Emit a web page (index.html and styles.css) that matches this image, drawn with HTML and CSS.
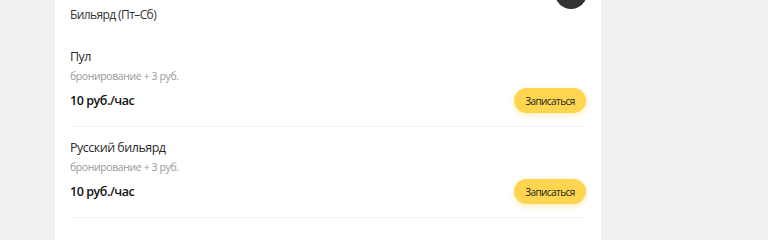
FILE: index.html
```html
<!DOCTYPE html>
<html lang="ru">
<head>
<meta charset="utf-8">
<link rel="stylesheet" href="styles.css">
</head>
<body>
<div class="page">
  <section class="card">
    <span class="avatar"></span>
    <h2 class="group-title">Бильярд (Пт–Сб)</h2>
    <div class="item">
      <div class="item-name">Пул</div>
      <div class="item-note">бронирование + 3 руб.</div>
      <div class="item-row">
        <span class="item-price">10 руб./час</span>
        <button class="btn">Записаться</button>
      </div>
    </div>
    <div class="item">
      <div class="item-name">Русский бильярд</div>
      <div class="item-note">бронирование + 3 руб.</div>
      <div class="item-row">
        <span class="item-price">10 руб./час</span>
        <button class="btn">Записаться</button>
      </div>
    </div>
  </section>
</div>
</body>
</html>
```
FILE: styles.css
```css
html, body {
  margin: 0;
  padding: 0;
  background: #f0f0f0;
  font-family: "Open Sans", "Noto Sans", sans-serif;
  color: #333;
}
.page {
  padding-left: 55px;
  height: 240px;
  overflow: hidden;
}
.card {
  position: relative;
  width: 516px;
  background: #fff;
  padding: 6px 15px 40px;
}
.avatar {
  position: absolute;
  top: -23px;
  right: 14px;
  width: 32px;
  height: 32px;
  border-radius: 50%;
  background: #333;
}
.group-title {
  margin: 0;
  font-size: 12px;
  font-weight: 400;
  line-height: 18px;
  letter-spacing: -0.6px;
  color: #333;
}
.item {
  padding: 23px 0 13px;
  border-bottom: 1px solid #efefef;
}
.item + .item {
  padding-top: 11px;
}
.item-name {
  font-size: 12.5px;
  line-height: 20px;
  letter-spacing: -0.5px;
  color: #2b2b2b;
}
.item-note {
  margin-top: 1px;
  font-size: 10.5px;
  line-height: 16px;
  letter-spacing: -0.4px;
  color: #999;
}
.item-row {
  display: flex;
  align-items: center;
  justify-content: space-between;
  margin-top: 4px;
}
.item-price {
  font-size: 12.5px;
  font-weight: 600;
  letter-spacing: -0.45px;
  color: #111;
}
.btn {
  height: 25px;
  width: 72px;
  border: 0;
  border-radius: 13px;
  background: #ffd54f;
  box-shadow: 0 2px 6px rgba(255, 200, 40, 0.35);
  font-family: inherit;
  font-size: 10px;
  letter-spacing: -0.55px;
  color: #222;
  padding: 0;
  cursor: pointer;
}
```
